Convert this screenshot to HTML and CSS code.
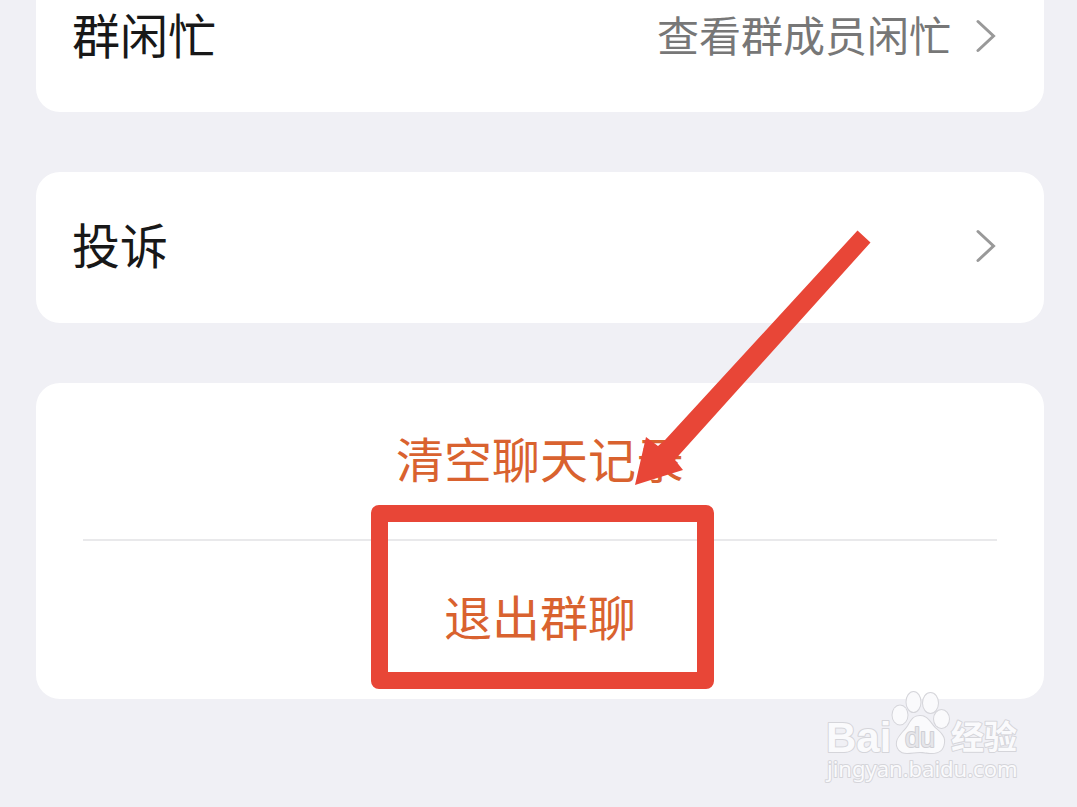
FILE: index.html
```
<!DOCTYPE html>
<html lang="zh-CN">
<head>
<meta charset="UTF-8">
<meta name="viewport" content="width=device-width, initial-scale=1">
<title>群聊设置</title>
<link rel="stylesheet" href="styles.css">
</head>
<body>
<div class="page">
	<div class="card card-first">
		<a class="row" href="#">
			<span class="row-title">群闲忙</span>
			<span class="row-value">查看群成员闲忙</span>
			<svg class="arrow-icon" viewBox="0 0 20 34"><path d="M2 2.500L17.500 17L2 31.500"/></svg>
		</a>
	</div>
	<div class="card">
		<a class="row" href="#">
			<span class="row-title">投诉</span>
			<svg class="arrow-icon" viewBox="0 0 20 34"><path d="M2 2.500L17.500 17L2 31.500"/></svg>
		</a>
	</div>
	<div class="card actions">
		<button type="button" class="action">清空聊天记录</button>
		<hr class="line">
		<button type="button" class="action">退出群聊</button>
		<!-- 标注：红框和箭头 -->
		<div class="mark">
			<svg class="mark-arrow" viewBox="0 0 240 260">
				<path d="M0 255L11 207L23 216L30 210L222.500 0.500L235.500 12.500L45 224L40 230L48 240L35 244Z"/>
			</svg>
		</div>
	</div>
	<!-- 水印 -->
	<svg class="logo" viewBox="0 0 204 104">
		<text class="logo-bai" x="6" y="67">Bai</text>
		<ellipse cx="93.500" cy="17" rx="7" ry="10"/>
		<ellipse cx="110.500" cy="18" rx="7.500" ry="10"/>
		<ellipse cx="80" cy="30" rx="7.500" ry="9.500"/>
		<ellipse cx="121.500" cy="34" rx="7.500" ry="9"/>
		<path d="M100 31C108 31 110 38 115 43C121 48 125 52 124 58C123 66 118 68 112 68C106 68 104 67 100 67C95 67 92 68 87 68C80 68 76 63 77 57C78 51 84 47 88 41C91 36 93 31 100 31Z"/>
		<text class="logo-du" x="85" y="62">du</text>
		<text class="logo-cn" x="131" y="64">经验</text>
		<text class="logo-url" x="7" y="92">jingyan.baidu.com</text>
	</svg>
</div>
</body>
</html>
```
FILE: styles.css
```
* {margin:0; padding:0; box-sizing:border-box;}
body {background:#f0f0f5; font-family:"Noto Sans CJK SC", sans-serif;}
.page {position:relative; min-height:100vh; padding:0 33px 60px 36px; display:flex; flex-direction:column; gap:60px;}
.card {background:#fff; border-radius:24px;}
.card-first {border-radius:0 0 24px 24px;}
.row {display:flex; align-items:center; padding:38px 48px 42px 36px; line-height:67px; color:#181818; text-decoration:none;}
.card-first .row {padding-top:0; padding-bottom:41px;}
.row-title {flex:1; padding-bottom:4px; font-size:48px;}
.row-value {padding-bottom:4px; font-size:42px; color:#777; margin-right:25px;}
.arrow-icon {width:20px; height:34px; fill:none; stroke:#999; stroke-width:3; stroke-linecap:round;}
.actions {position:relative; padding-bottom:2px;}
.action {display:block; width:100%; padding:39px 0 47px; border:0; background:none; font-family:inherit; font-size:48px; line-height:70px; color:#d9622f; cursor:pointer;}
.line {height:2px; border:0; margin:0 47px; background:#e9e9eb;}
.mark {position:absolute; left:50%; top:122px; width:343px; height:184px; margin-left:-169px; border:17px solid #e84637; border-radius:8px; pointer-events:none;}
.mark-arrow {position:absolute; left:247px; top:-292px; width:240px; height:260px; fill:#e84637;}
.logo {position:absolute; right:53px; bottom:18px; width:204px; height:104px; fill:#fafafc; stroke:#d5d5da; stroke-width:2; paint-order:stroke; stroke-linejoin:round;}
.logo-bai {font:bold 42px "Liberation Sans", sans-serif;}
.logo-du {font:27px "Liberation Sans", sans-serif; fill:#e6e6ea; stroke:#cfcfd4;}
.logo-cn {font:bold 33px "Noto Sans CJK SC", sans-serif;}
.logo-url {font:22px "Noto Sans", sans-serif;}
```
